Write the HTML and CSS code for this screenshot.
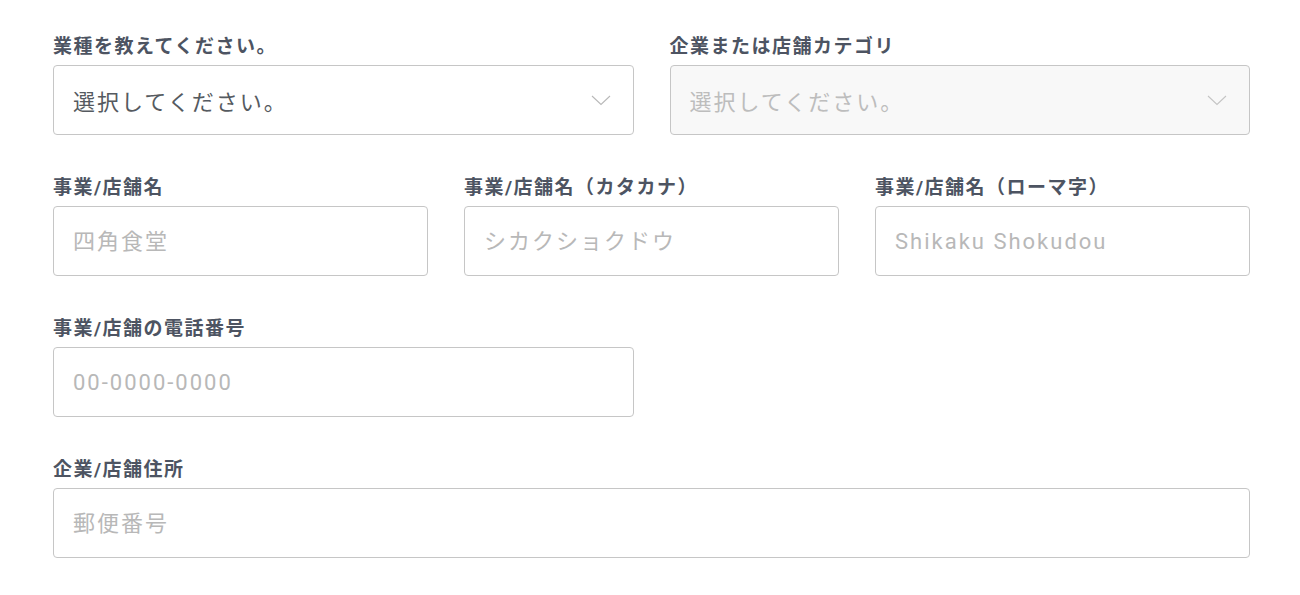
FILE: index.html
```html
<!DOCTYPE html>
<html lang="ja">
<head>
<meta charset="utf-8">
<title>事業情報</title>
<link rel="stylesheet" href="styles.css">
</head>
<body>
<form class="form">
  <div class="row cols-2">
    <div class="field">
      <label class="label">業種を教えてください。</label>
      <div class="control select">
        <span class="value">選択してください。</span>
        <svg class="chevron" width="20" height="11" viewBox="0 0 20 11"><path d="M1 1 L10 9.5 L19 1" fill="none" stroke="currentColor" stroke-width="1.1"/></svg>
      </div>
    </div>
    <div class="field">
      <label class="label">企業または店舗カテゴリ</label>
      <div class="control select disabled">
        <span class="value">選択してください。</span>
        <svg class="chevron" width="20" height="11" viewBox="0 0 20 11"><path d="M1 1 L10 9.5 L19 1" fill="none" stroke="currentColor" stroke-width="1.1"/></svg>
      </div>
    </div>
  </div>
  <div class="row cols-3">
    <div class="field">
      <label class="label">事業/店舗名</label>
      <input class="control" type="text" placeholder="四角食堂">
    </div>
    <div class="field">
      <label class="label">事業/店舗名（カタカナ）</label>
      <input class="control" type="text" placeholder="シカクショクドウ">
    </div>
    <div class="field">
      <label class="label">事業/店舗名（ローマ字）</label>
      <input class="control" type="text" placeholder="Shikaku Shokudou">
    </div>
  </div>
  <div class="row cols-2">
    <div class="field">
      <label class="label">事業/店舗の電話番号</label>
      <input class="control" type="text" placeholder="00-0000-0000">
    </div>
  </div>
  <div class="row">
    <div class="field">
      <label class="label">企業/店舗住所</label>
      <input class="control" type="text" placeholder="郵便番号">
    </div>
  </div>
</form>
</body>
</html>
```
FILE: styles.css
```css
* { box-sizing: border-box; }
html, body { margin: 0; padding: 0; background: #fff; }
body {
  font-family: Roboto, "Noto Sans CJK JP", sans-serif;
}
.form {
  width: 1197px;
  margin-left: 53px;
  padding-top: 35px;
  display: flex;
  flex-direction: column;
  gap: 41px;
}
.row {
  display: grid;
  grid-template-columns: 1fr;
  column-gap: 36px;
}
.row.cols-2 { grid-template-columns: 1fr 1fr; }
.row.cols-3 { grid-template-columns: 1fr 1fr 1fr; }
.field {
  display: flex;
  flex-direction: column;
  gap: 6px;
}
.label {
  font-size: 19px;
  line-height: 24px;
  font-weight: 700;
  color: #4d5462;
  letter-spacing: 1.5px;
}
.control {
  height: 70px;
  width: 100%;
  border: 1px solid #c6c6c6;
  border-radius: 4px;
  background: #fff;
  padding: 0 22px 0 19px;
  font-family: Roboto, "Noto Sans CJK JP", sans-serif;
  font-size: 22px;
  font-weight: 400;
  letter-spacing: 2px;
  color: #555a60;
  outline: none;
  margin: 0;
}
.control::placeholder { color: #b8b8b8; opacity: 1; }
.select {
  display: flex;
  align-items: center;
  justify-content: space-between;
}
.select .value { color: #555a60; }
.select .chevron { color: #b8b8b8; flex: none; }
.select.disabled { background: #f8f8f8; }
.select.disabled .value { color: #bdbdbd; }
.select.disabled .chevron { color: #c4c4c4; }
```
